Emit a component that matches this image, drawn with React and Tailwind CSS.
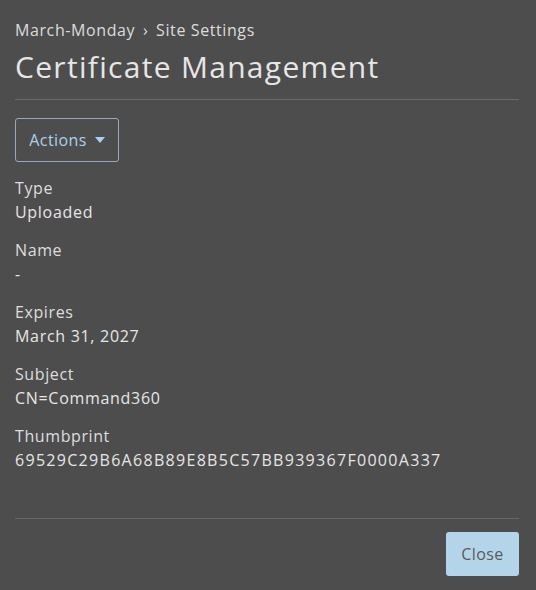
export default function App() {
  const fields = [
    { label: "Type", value: "Uploaded" },
    { label: "Name", value: "-" },
    { label: "Expires", value: "March 31, 2027" },
    { label: "Subject", value: "CN=Command360" },
    { label: "Thumbprint", value: "69529C29B6A68B89E8B5C57BB939367F0000A337", wide: true },
  ];

  return (
    <div
      className="w-[536px] h-[590px] bg-[#4d4d4d] pl-[15px] pr-[17px] flex flex-col"
      style={{ fontFamily: '"Open Sans", "Noto Sans", sans-serif' }}
    >
      <div className="pt-[19px] text-[16px] leading-[22px] text-[#dcdcdc] tracking-[0.6px]">
        March-Monday <span className="mx-[3px]">›</span> Site Settings
      </div>
      <h1 className="mt-[6px] text-[30px] leading-[40px] text-[#e6e6e6] font-normal tracking-[1.3px]">
        Certificate Management
      </h1>
      <div className="mt-[12px] border-t border-[#6a6a6a]" />

      <div className="mt-[18px]">
        <button className="h-[44px] w-[104px] rounded-[3px] border border-[#9aa9b5] text-[#acd0ec] text-[16px] font-medium tracking-[0.4px] flex items-center justify-center gap-[8px]">
          Actions
          <svg width="10" height="6" viewBox="0 0 10 6">
            <path d="M0 0 L10 0 L5 6 Z" fill="#acd0ec" />
          </svg>
        </button>
      </div>

      <div className="mt-[14px] flex flex-col gap-[14px]">
        {fields.map((f) => (
          <div key={f.label} className="flex flex-col">
            <div className="text-[16px] leading-[24px] text-[#dedede] tracking-[0.6px]">{f.label}</div>
            <div
              className={
                f.wide
                  ? "text-[16px] leading-[24px] text-[#e6e6e6] font-medium tracking-[1.3px]"
                  : "text-[16px] leading-[24px] text-[#e6e6e6] font-medium tracking-[0.7px]"
              }
            >
              {f.value}
            </div>
          </div>
        ))}
      </div>

      <div className="mt-auto border-t border-[#676767]" />
      <div className="flex justify-end pt-[13px] pb-[14px]">
        <button className="h-[44px] w-[73px] rounded-[3px] bg-[#b4d4ea] text-[#5a5a5a] text-[16px] tracking-[0.4px]">
          Close
        </button>
      </div>
    </div>
  );
}
